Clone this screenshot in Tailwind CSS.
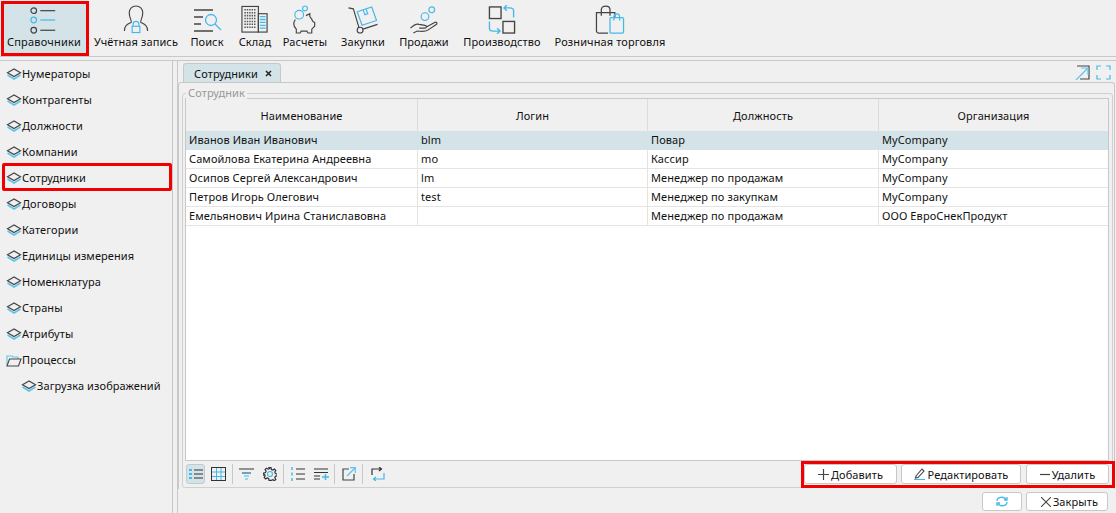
<!DOCTYPE html>
<html lang="ru">

<head>
  <meta charset="UTF-8">
  <title>Сотрудники</title>
  <script src="https://cdn.jsdelivr.net/npm/@tailwindcss/browser@4"></script>
</head>

<body class="w-[1116px] h-[513px] overflow-hidden bg-[#f0f0f0] text-[11px] leading-[15px] tracking-[0.1px] text-[#111] font-['Noto_Sans','Open_Sans',sans-serif]">
  <svg class="hidden">
    <symbol id="layers" viewBox="0 0 16 12">
      <path d="M1.500 7 8 11l6.500-4" fill="none" stroke="#5cc3ee" stroke-width="1.500" />
      <path d="M8 1 1.500 4.800 8 8.500l6.500-3.700z" fill="#f0f0f0" stroke="#444" stroke-width="1.200" />
    </symbol>
  </svg>

  <!-- toolbar -->
  <div class="h-[60px]">
    <div class="h-[57px] flex items-stretch pl-[1px] border-b border-[#c8c8c8]">
      <div class="w-[88px] h-[55px] mt-[1px] border-[3px] border-[#f00000] bg-[#d3e3e8] flex flex-col items-center justify-between pt-[2px] pb-[4px] pr-[2px]">
        <svg width="30" height="30" viewBox="0 0 30 30" fill="none" stroke-width="1.300">
          <circle cx="4" cy="5" r="3" stroke="#444" />
          <path d="M11 5h16" stroke="#444" />
          <circle cx="4" cy="15" r="3" stroke="#45b8ea" />
          <path d="M11 15h16" stroke="#45b8ea" />
          <circle cx="4" cy="26" r="3" stroke="#444" />
          <path d="M11 26h16" stroke="#444" />
        </svg>
        <span class="tracking-[0.2px]">Справочники</span>
      </div>
      <div class="w-[94px] flex flex-col items-center justify-between pt-[5px] pb-[7px]">
        <svg width="26" height="30" viewBox="0 0 26 30" fill="none" stroke-width="1.200">
          <path d="M1 27c0-6 3-7 7-9 1-2-2-4-2-10 0-4 3-7 7-7s7 3 7 7c0 6-3 8-2 10 4 2 7 3 7 9" stroke="#444" />
          <path d="M10 22v-2a3 3 0 0 1 6 0v2" stroke="#45b8ea" />
          <rect x="9" y="22" width="8" height="6.500" stroke="#45b8ea" />
        </svg>
        <span>Учётная запись</span>
      </div>
      <div class="w-[48px] flex flex-col items-center justify-between pt-[7px] pb-[7px]">
        <svg width="30" height="26" viewBox="0 0 30 26" fill="none" stroke-width="1.300">
          <path d="M2 3h19M2 10h9M2 17h7M2 24h19" stroke="#444" />
          <circle cx="19" cy="13" r="5.500" stroke="#45b8ea" />
          <path d="m23 17 6 6" stroke="#45b8ea" />
        </svg>
        <span>Поиск</span>
      </div>
      <div class="w-[48px] flex flex-col items-center justify-between pt-[5px] pb-[7px]">
        <svg width="30" height="30" viewBox="0 0 30 30" fill="none">
          <rect x="1.500" y="1.500" width="17" height="26.500" stroke="#444" stroke-width="1.200" />
          <path d="M4 5h12M4 8h12M4 11h12M4 14h12M4 17h12M4 20h12M4 23h12" stroke="#555" stroke-width="1.600" stroke-dasharray="1.500 1" />
          <rect x="18.500" y="9" width="9" height="19" stroke="#444" stroke-width="1.200" />
          <path d="M20 12h6M20 15h6M20 18h6M20 21h6M20 24h6" stroke="#45b8ea" stroke-width="1.300" />
        </svg>
        <span>Склад</span>
      </div>
      <div class="w-[52px] flex flex-col items-center justify-between pt-[5px] pb-[7px]">
        <svg width="26" height="30" viewBox="0 0 26 30" fill="none" stroke-width="1.200">
          <circle cx="13" cy="3.500" r="2.500" stroke="#45b8ea" />
          <circle cx="7" cy="10" r="4.500" stroke="#45b8ea" />
          <path d="M3 15c-2 3-2 7 1 10v4h4l1-2h6l1 2h4v-4l3-3v-4l-2-1c-1-3-2-4-3-5V9l-4 2" stroke="#444" />
        </svg>
        <span>Расчеты</span>
      </div>
      <div class="w-[64px] flex flex-col items-center justify-between pt-[5px] pb-[7px]">
        <svg width="30" height="30" viewBox="0 0 30 30" fill="none" stroke-width="1.200">
          <path d="m0 3 5 1 6 20" stroke="#444" />
          <circle cx="12" cy="26" r="3" stroke="#444" />
          <path d="m15 25 15-5" stroke="#444" />
          <path d="m9 7 15-5 5 14-15 5z" stroke="#45b8ea" />
          <path d="m15 5 2 5 3-1-2-5" stroke="#45b8ea" />
        </svg>
        <span>Закупки</span>
      </div>
      <div class="w-[58px] flex flex-col items-center justify-between pt-[5px] pb-[7px]">
        <svg width="30" height="30" viewBox="0 0 30 30" fill="none" stroke-width="1.200">
          <circle cx="23" cy="5" r="3" stroke="#45b8ea" />
          <circle cx="16" cy="12" r="4" stroke="#45b8ea" />
          <path d="M1 24c3-3 6-5 9-4l6 1c2 0 2 3 0 3h-6m7-1 9-5c2-1 3 1 2 2l-9 6c-3 2-8 1-11 1l-4 2" stroke="#444" />
        </svg>
        <span>Продажи</span>
      </div>
      <div class="w-[98px] flex flex-col items-center justify-between pt-[5px] pb-[7px]">
        <svg width="30" height="30" viewBox="0 0 30 30" fill="none" stroke-width="1.400">
          <rect x="2" y="2" width="12" height="12" stroke="#444" />
          <rect x="16" y="17" width="12" height="12" stroke="#444" />
          <path d="M27 13V6c0-2-2-3-4-3h-5m2-3-3 3 3 3" stroke="#45b8ea" />
          <path d="M2 17v7c0 2 2 3 4 3h6m-2-3 3 3-3 3" stroke="#45b8ea" />
        </svg>
        <span>Производство</span>
      </div>
      <div class="w-[118px] flex flex-col items-center justify-between pt-[5px] pb-[7px]">
        <svg width="32" height="30" viewBox="0 0 32 30" fill="none" stroke-width="1.300">
          <path d="M14 29H4c-1 0-2-1-2-2V8h19v5M7 11V5c0-5 9-5 9 0v6" stroke="#444" />
          <rect x="16" y="13" width="14" height="16" rx="1" stroke="#45b8ea" />
          <path d="M20 16v-3c0-5 6-5 6 0v3" stroke="#45b8ea" />
        </svg>
        <span>Розничная торговля</span>
      </div>
    </div>
  </div>

  <div class="h-[453px] border-t border-[#c8c8c8] flex">
    <!-- sidebar -->
    <div class="w-[172px] pl-[2px] flex flex-col shrink-0">
      <div class="h-[26px] pl-[4px] flex items-center"><svg width="16" height="12"><use href="#layers" /></svg><span class="relative top-[-1px]">Нумераторы</span></div>
      <div class="h-[26px] pl-[4px] flex items-center"><svg width="16" height="12"><use href="#layers" /></svg><span class="relative top-[-1px]">Контрагенты</span></div>
      <div class="h-[26px] pl-[4px] flex items-center"><svg width="16" height="12"><use href="#layers" /></svg><span class="relative top-[-1px]">Должности</span></div>
      <div class="h-[26px] pl-[4px] flex items-center"><svg width="16" height="12"><use href="#layers" /></svg><span class="relative top-[-1px]">Компании</span></div>
      <div class="h-[28px] mt-[-2px] pt-[2px] pl-[4px] flex items-center rounded-[2px] outline-[3px] outline-offset-[-3px] outline-[#f00000]"><svg width="16" height="12"><use href="#layers" /></svg><span class="relative top-[-1px]">Сотрудники</span></div>
      <div class="h-[26px] pl-[4px] flex items-center"><svg width="16" height="12"><use href="#layers" /></svg><span class="relative top-[-1px]">Договоры</span></div>
      <div class="h-[26px] pl-[4px] flex items-center"><svg width="16" height="12"><use href="#layers" /></svg><span class="relative top-[-1px]">Категории</span></div>
      <div class="h-[26px] pl-[4px] flex items-center"><svg width="16" height="12"><use href="#layers" /></svg><span class="relative top-[-1px]">Единицы измерения</span></div>
      <div class="h-[26px] pl-[4px] flex items-center"><svg width="16" height="12"><use href="#layers" /></svg><span class="relative top-[-1px]">Номенклатура</span></div>
      <div class="h-[26px] pl-[4px] flex items-center"><svg width="16" height="12"><use href="#layers" /></svg><span class="relative top-[-1px]">Страны</span></div>
      <div class="h-[26px] pl-[4px] flex items-center"><svg width="16" height="12"><use href="#layers" /></svg><span class="relative top-[-1px]">Атрибуты</span></div>
      <div class="h-[26px] pl-[4px] flex items-center">
        <svg width="16" height="13" viewBox="0 0 16 13" fill="none" stroke-width="1.100">
          <path d="M1 11V2h5l1 1h5v2" stroke="#5cc3ee" />
          <path d="M1 12 3.500 5H15l-2.500 7z" stroke="#444" />
        </svg><span class="relative top-[-1px]">Процессы</span>
      </div>
      <div class="h-[26px] pl-[19px] flex items-center"><svg width="16" height="12"><use href="#layers" /></svg><span class="relative top-[-1px]">Загрузка изображений</span></div>
    </div>
    <!-- splitter -->
    <div class="w-[6px] shrink-0 border-x border-[#c8c8c8]"></div>

    <!-- main -->
    <div class="w-[938px] flex flex-col pt-[2px]">
      <div class="h-[19px] flex justify-between shrink-0 pr-[5px]">
        <div class="w-[98px] ml-[5px] h-[19px] bg-[#d3e3e8] border border-b-0 border-[#c8c8c8] rounded-t-[3px] flex items-center pl-[10px] gap-[7px]">
          <span>Сотрудники</span>
          <svg width="7" height="7" viewBox="0 0 7 7" stroke="#222" stroke-width="1.500"><path d="m1 1 5 5M6 1 1 6" /></svg>
        </div>
        <div class="flex gap-[6px] items-start pt-[2px]">
          <svg width="15" height="15" viewBox="0 0 15 15" fill="none" stroke-width="1.200">
            <path d="M2 1h12v13H5" stroke="#444" />
            <path d="M1 15 12 4M6 3h7v7" stroke="#5cc3ee" />
          </svg>
          <svg width="15" height="15" viewBox="0 0 15 15" fill="none" stroke="#45b8ea" stroke-width="1.200">
            <path d="M1 5V1h4M10 1h4v4M14 10v4h-4M5 14H1v-4" />
          </svg>
        </div>
      </div>

      <div class="w-[937px] h-[407px] shrink-0 border border-b-0 border-[#c8c8c8] rounded-t-[3px] pl-[3px] pt-[10px]">
        <div class="w-[931px] h-[395px] border border-[#d0d0d0] rounded-[3px] px-[2px] pt-[4px] relative">
          <span class="absolute left-[3px] top-[-8px] bg-[#f0f0f0] px-[2px] text-[#999] leading-[13px]">Сотрудник</span>
          <!-- table -->
          <div class="w-[924px] h-[363px] border border-[#c8c8c8] bg-white flex flex-col">
            <div class="h-[32px] grid grid-cols-[232px_230px_231px_1fr] bg-[#f0f0f0] shrink-0">
              <div class="flex items-center justify-center border-r border-[#dcdcdc]">Наименование</div>
              <div class="flex items-center justify-center border-r border-[#dcdcdc]">Логин</div>
              <div class="flex items-center justify-center border-r border-[#dcdcdc]">Должность</div>
              <div class="flex items-center justify-center">Организация</div>
            </div>
            <div class="h-[19px] grid grid-cols-[232px_230px_231px_1fr] bg-[#d3e3e8] leading-[18px]">
              <div class="pl-[3px]">Иванов Иван Иванович</div>
              <div class="pl-[3px]">blm</div>
              <div class="pl-[3px]">Повар</div>
              <div class="pl-[3px]">MyCompany</div>
            </div>
            <div class="h-[19px] grid grid-cols-[232px_230px_231px_1fr] border-b border-[#e4e4e4] leading-[18px]">
              <div class="pl-[3px] border-r border-[#e4e4e4]">Самойлова Екатерина Андреевна</div>
              <div class="pl-[3px] border-r border-[#e4e4e4]">mo</div>
              <div class="pl-[3px] border-r border-[#e4e4e4]">Кассир</div>
              <div class="pl-[3px]">MyCompany</div>
            </div>
            <div class="h-[19px] grid grid-cols-[232px_230px_231px_1fr] border-b border-[#e4e4e4] leading-[18px]">
              <div class="pl-[3px] border-r border-[#e4e4e4]">Осипов Сергей Александрович</div>
              <div class="pl-[3px] border-r border-[#e4e4e4]">lm</div>
              <div class="pl-[3px] border-r border-[#e4e4e4]">Менеджер по продажам</div>
              <div class="pl-[3px]">MyCompany</div>
            </div>
            <div class="h-[19px] grid grid-cols-[232px_230px_231px_1fr] border-b border-[#e4e4e4] leading-[18px]">
              <div class="pl-[3px] border-r border-[#e4e4e4]">Петров Игорь Олегович</div>
              <div class="pl-[3px] border-r border-[#e4e4e4]">test</div>
              <div class="pl-[3px] border-r border-[#e4e4e4]">Менеджер по закупкам</div>
              <div class="pl-[3px]">MyCompany</div>
            </div>
            <div class="h-[19px] grid grid-cols-[232px_230px_231px_1fr] border-b border-[#e4e4e4] leading-[18px]">
              <div class="pl-[3px] border-r border-[#e4e4e4]">Емельянович Ирина Станиславовна</div>
              <div class="pl-[3px] border-r border-[#e4e4e4]"></div>
              <div class="pl-[3px] border-r border-[#e4e4e4]">Менеджер по продажам</div>
              <div class="pl-[3px]">ООО ЕвроСнекПродукт</div>
            </div>
          </div>

          <!-- table tools -->
          <div class="h-[25px] flex items-center pl-[1px]">
            <div class="w-[19px] h-[20px] shrink-0 bg-[#d3e3e8] border border-[#bcccd0] rounded-[3px] flex items-center justify-center">
              <svg width="14" height="12" viewBox="0 0 14 12" fill="none" stroke-width="1.200">
                <path d="M0 2h3M0 6h3M0 10h3" stroke="#45b8ea" stroke-width="2" />
                <path d="M5 2h9M5 6h9M5 10h9" stroke="#333" />
              </svg>
            </div>
            <div class="w-[27px] h-[20px] flex items-center justify-center">
              <svg width="15" height="14" viewBox="0 0 15 14" fill="none">
                <path d="M5.500 1v12M10 1v12M1 5h13M1 9.500h13" stroke="#45b8ea" />
                <rect x=".5" y=".5" width="14" height="13" stroke="#333" />
              </svg>
            </div>
            <div class="w-[1px] h-[20px] bg-[#c8c8c8]"></div>
            <div class="w-[27px] flex justify-center">
              <svg width="15" height="12" viewBox="0 0 15 12" fill="none" stroke-width="1.200">
                <path d="M0 1h15M3 5h9" stroke="#333" />
                <path d="M3 5h9M5 8h5M6 11h3" stroke="#45b8ea" />
              </svg>
            </div>
            <div class="w-[20px] flex justify-center">
              <svg width="14" height="14" viewBox="0 0 14 14" fill="none" stroke="#333" stroke-width="1.200">
                <path d="M6 .7h2l.4 1.800 1.500.6 1.500-1 1.400 1.400-1 1.500.6 1.500 1.800.4v2l-1.800.4-.6 1.500 1 1.500-1.400 1.400-1.500-1-1.500.6L8 13.300H6l-.4-1.800-1.500-.6-1.500 1-1.400-1.400 1-1.500-.6-1.500L.7 8V6l1.800-.4.6-1.500-1-1.500 1.400-1.400 1.500 1 1.500-.6z" />
                <circle cx="7" cy="7" r="2.500" stroke="#45b8ea" />
              </svg>
            </div>
            <div class="w-[1px] h-[20px] bg-[#c8c8c8] ml-[3px]"></div>
            <div class="w-[28px] flex justify-center">
              <svg width="14" height="14" viewBox="0 0 14 14" fill="none">
                <path d="M1 0v3M1 5.500v3M1 11v3" stroke="#45b8ea" stroke-width="1.500" />
                <path d="M5 2h9M5 7h9M5 12h9" stroke="#333" stroke-width="1.200" />
              </svg>
            </div>
            <div class="w-[18px] flex justify-center">
              <svg width="15" height="12" viewBox="0 0 15 12" fill="none" stroke-width="1.200">
                <path d="M0 1h14M0 4.500h14M0 8h6M0 11h6" stroke="#333" />
                <path d="M8 9h7M11.500 6v6" stroke="#45b8ea" stroke-width="1.500" />
              </svg>
            </div>
            <div class="w-[1px] h-[20px] bg-[#c8c8c8] ml-[4px]"></div>
            <div class="w-[27px] flex justify-center">
              <svg width="14" height="14" viewBox="0 0 14 14" fill="none" stroke-width="1.200">
                <path d="M7 2H1v11h11V7" stroke="#444" />
                <path d="m5 9 8-8M8 .7h5.300V6" stroke="#5cc3ee" />
              </svg>
            </div>
            <div class="w-[1px] h-[20px] bg-[#c8c8c8]"></div>
            <div class="w-[27px] flex justify-center">
              <svg width="16" height="14" viewBox="0 0 16 14" fill="none" stroke-width="1.200">
                <path d="M3 8V2h9M10 0l2.500 2L10 4" stroke="#333" />
                <path d="M15 6v6H5M7 10l-2.500 2L7 14" stroke="#45b8ea" />
              </svg>
            </div>
          </div>
          <!-- red-framed actions sit over the panel edge -->
          <div class="absolute left-[618px] top-[367px] w-[314px] h-[27px] border-[3px] border-[#f00000] bg-[#f0f0f0] flex items-start">
            <button class="w-[93px] h-[20px] bg-white border border-[#c8c8c8] rounded-[3px] flex items-center justify-center gap-[2px]">
              <svg width="11" height="11" viewBox="0 0 11 11" stroke="#444" stroke-width="1.200"><path d="M5.500 0v11M0 5.500h11" /></svg>
              <span>Добавить</span>
            </button>
            <button class="w-[120px] h-[20px] ml-[4px] bg-white border border-[#c8c8c8] rounded-[3px] flex items-center justify-center gap-[3px]">
              <svg width="11" height="12" viewBox="0 0 11 12" fill="none" stroke-width="1.100">
                <path d="m2 8 6-7 2 2-6 6.500L1.500 10z" stroke="#444" />
                <path d="M0 11.500h11" stroke="#45b8ea" />
              </svg>
              <span>Редактировать</span>
            </button>
            <button class="w-[83px] h-[20px] ml-[5px] bg-white border border-[#c8c8c8] rounded-[3px] flex items-center justify-center gap-[2px]">
              <svg width="10" height="3" viewBox="0 0 10 3" stroke="#444" stroke-width="1.200"><path d="M0 1.500h10" /></svg>
              <span>Удалить</span>
            </button>
          </div>
        </div>
      </div>

      <!-- bottom -->
      <div class="flex justify-end gap-[4px] pr-[8px] pt-[3px]">
        <button class="w-[40px] h-[19px] bg-white border border-[#c8c8c8] rounded-[3px] flex items-center justify-center">
          <svg width="12" height="11" viewBox="0 0 12 11" fill="none" stroke-width="1.300">
            <path d="M1 5c0-4 6-5 9-2M11 1v3H8" stroke="#45b8ea" />
            <path d="M11 6c0 4-6 5-9 2M1 10V7h3" stroke="#45b8ea" />
          </svg>
        </button>
        <button class="w-[82px] h-[19px] pl-[5px] bg-white border border-[#c8c8c8] rounded-[3px] flex items-center justify-center gap-[2px]">
          <svg width="10" height="10" viewBox="0 0 10 10" stroke="#444" stroke-width="1.100"><path d="m0 0 10 10M10 0 0 10" /></svg>
          <span>Закрыть</span>
        </button>
      </div>
    </div>
  </div>
</body>

</html>
